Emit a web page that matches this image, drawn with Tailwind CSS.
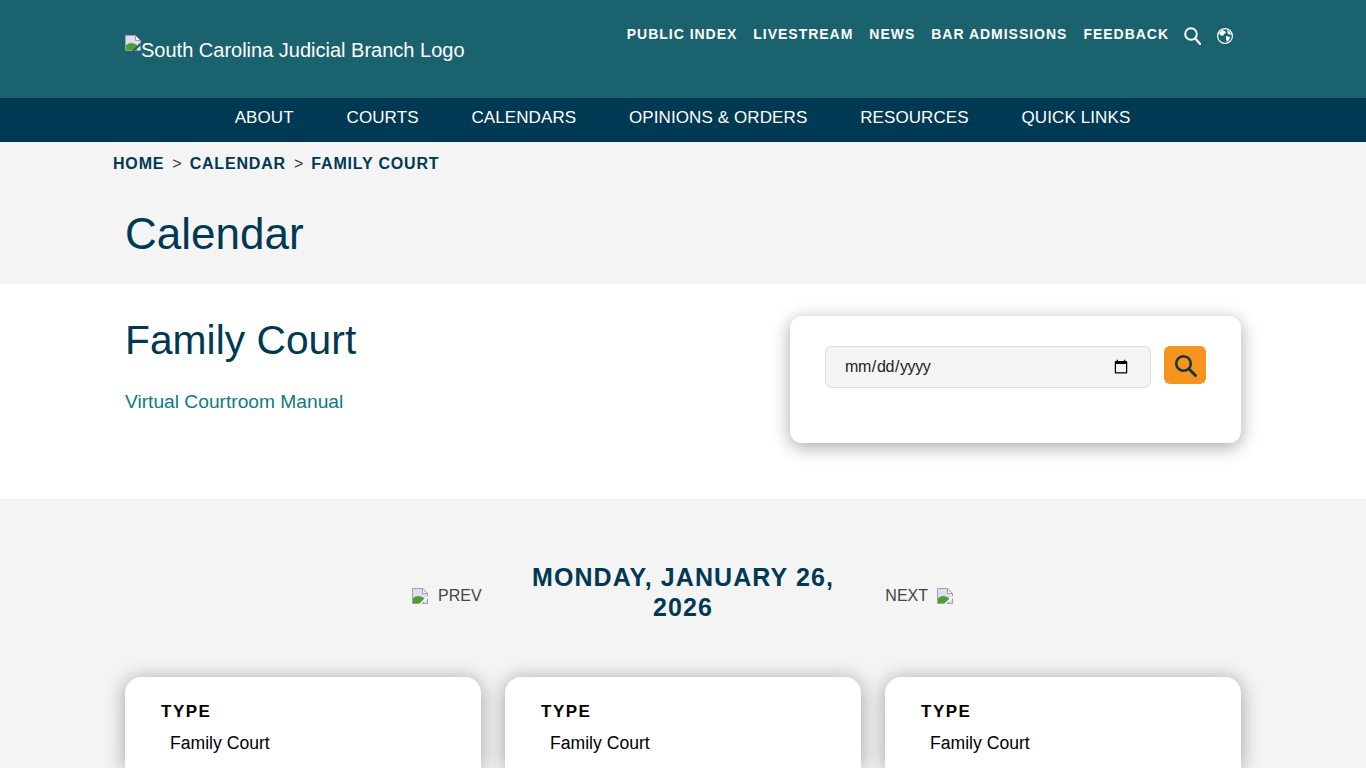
<!DOCTYPE html>
<html lang="en">
<head>
  <meta charset="UTF-8" />
  <title>Calendar - Family Court</title>
  <script src="https://cdn.jsdelivr.net/npm/@tailwindcss/browser@4"></script>
</head>
<body class="h-screen overflow-hidden bg-[#f4f4f4] font-['Liberation_Sans',Arial,sans-serif] text-black">
  <!-- top header -->
  <header class="h-[98px] bg-[#1b626f] text-white">
    <div class="w-[1140px] mx-auto px-3 flex justify-between">
      <a href="#" class="flex items-start pt-[35px] text-[20px] leading-[30px] text-white">
        <svg class="w-4 h-4 shrink-0" viewBox="0 0 16 16">
          <path d="M.5.5h10l5 5v10H.5z" fill="#dfdcf5" stroke="#a0a0a4"/>
          <path d="M10.5.5v5h5z" fill="#fff" stroke="#a0a0a4"/>
          <path d="M1 15v-5q4-3 8-1.500l3 1.500v5z" fill="#4f9e30"/>
          <path d="M7 16l8-8 1 .7v1.600L9.500 16z" fill="#1b626f"/>
        </svg>
        <span>South Carolina Judicial Branch Logo</span>
      </a>
      <nav class="flex items-start gap-4 pt-[25px] pr-[8px] text-[14px] leading-[18px] font-bold tracking-[0.98px]">
        <a href="#">PUBLIC INDEX</a>
        <a href="#">LIVESTREAM</a>
        <a href="#">NEWS</a>
        <a href="#">BAR ADMISSIONS</a>
        <a href="#">FEEDBACK</a>
        <svg class="w-[17px] h-[18px] mt-[2px] -ml-[1px]" viewBox="0 0 17 18" fill="none" stroke="#fff" stroke-width="2">
          <circle cx="7" cy="7" r="5.8"/>
          <path d="M11 11.3l5.2 5.7" stroke-linecap="round" stroke-width="2.2"/>
        </svg>
        <svg class="w-4 h-4 mt-[3px]" viewBox="0 0 16 16">
          <circle cx="8" cy="8" r="7.4" fill="none" stroke="#fff" stroke-width="1.2"/>
          <path d="M5 2l3 1 1 2-2 1-1 2-3-1-1-2zM9 8l4 1-1 3-2 2-1-3zM10 2l3 2 1 3-3-1z" fill="#fff"/>
        </svg>
      </nav>
    </div>
  </header>

  <!-- main nav -->
  <nav class="h-11 pb-1 pr-[1px] bg-[#003953] text-white flex justify-center items-center gap-[52.8px] text-[17px] tracking-[0.1px]">
    <a href="#">ABOUT</a>
    <a href="#">COURTS</a>
    <a href="#">CALENDARS</a>
    <a href="#">OPINIONS &amp; ORDERS</a>
    <a href="#">RESOURCES</a>
    <a href="#">QUICK LINKS</a>
  </nav>

  <!-- breadcrumb and title -->
  <div class="h-[142px] w-[1140px] mx-auto">
    <div class="flex items-center h-[43px] text-[16px] font-bold tracking-[0.82px] text-[#003953]">
      <a href="#">HOME</a>
      <span class="mx-2 font-normal tracking-normal text-[#333]">&gt;</span>
      <a href="#">CALENDAR</a>
      <span class="mx-2 font-normal tracking-normal text-[#333]">&gt;</span>
      <a href="#">FAMILY COURT</a>
    </div>
    <h1 class="px-3 pt-[23px] text-[44px] leading-[52px] text-[#003953]">Calendar</h1>
  </div>

  <!-- family court section -->
  <section class="h-[215px] bg-white">
    <div class="w-[1140px] mx-auto px-3 flex justify-between">
      <div class="pt-[30px]">
        <h2 class="text-[40.8px] leading-[52px] text-[#003953]">Family Court</h2>
        <a href="#" class="block mt-[24px] text-[19.2px] leading-[24px] text-[#0b7a85]">Virtual Courtroom Manual</a>
      </div>
      <div class="mt-8 w-[451px] h-[127px] bg-white rounded-xl shadow-[0_4px_18px_rgba(0,0,0,0.35)] pt-[30px] px-[35px] flex items-start gap-[13px]">
        <input type="date" class="w-[326px] h-[42px] pl-[18px] pr-[19px] bg-[#f4f4f4] border border-[#dedede] rounded-md text-[16px] tracking-[-0.4px] text-[#222]" />
        <button class="w-[42px] h-[38px] bg-[#f7941d] rounded-md flex items-center justify-center">
          <svg class="w-[23px] h-[23px]" viewBox="0 0 23 23" fill="none" stroke="#12393f" stroke-width="2.6">
            <circle cx="9.5" cy="9.5" r="7.3"/>
            <path d="M15 15l6.5 6.5" stroke-linecap="round" stroke-width="3"/>
          </svg>
        </button>
      </div>
    </div>
  </section>

  <!-- day selector -->
  <section class="pt-[63px] w-[1140px] mx-auto px-3">
    <div class="flex justify-center items-center pr-[1px]">
      <a href="#" class="flex items-center w-[110px] mt-2 text-[16px] text-[#444]">
        <svg class="w-4 h-4 shrink-0" viewBox="0 0 16 16">
          <path d="M.5.5h10l5 5v10H.5z" fill="#dfdcf5" stroke="#a0a0a4"/>
          <path d="M10.5.5v5h5z" fill="#fff" stroke="#a0a0a4"/>
          <path d="M1 15v-5q4-3 8-1.500l3 1.500v5z" fill="#4f9e30"/>
          <path d="M7 16l8-8 1 .7v1.600L9.500 16z" fill="#f4f4f4"/>
        </svg>
        <span class="ml-[10px]">PREV</span>
      </a>
      <h3 class="w-[322px] text-center text-[25px] leading-[30px] font-bold tracking-[1.1px] text-[#003953]">MONDAY, JANUARY 26, 2026</h3>
      <a href="#" class="flex items-center justify-end w-[109px] mt-2 text-[16px] text-[#444]">
        <span class="mr-[9px]">NEXT</span>
        <svg class="w-4 h-4 shrink-0" viewBox="0 0 16 16">
          <path d="M.5.5h10l5 5v10H.5z" fill="#dfdcf5" stroke="#a0a0a4"/>
          <path d="M10.5.5v5h5z" fill="#fff" stroke="#a0a0a4"/>
          <path d="M1 15v-5q4-3 8-1.500l3 1.500v5z" fill="#4f9e30"/>
          <path d="M7 16l8-8 1 .7v1.600L9.500 16z" fill="#f4f4f4"/>
        </svg>
      </a>
    </div>

    <!-- hearing cards -->
    <div class="grid grid-cols-3 gap-6 mt-[55px]">
      <div class="h-[91px] bg-white rounded-t-2xl shadow-[0_2px_20px_rgba(0,0,0,0.35)] pt-[25px] pl-9">
        <div class="text-[17px] leading-5 font-bold tracking-[1.5px]">TYPE</div>
        <div class="mt-[11px] ml-[9px] text-[17.6px] leading-5">Family Court</div>
      </div>
      <div class="h-[91px] bg-white rounded-t-2xl shadow-[0_2px_20px_rgba(0,0,0,0.35)] pt-[25px] pl-9">
        <div class="text-[17px] leading-5 font-bold tracking-[1.5px]">TYPE</div>
        <div class="mt-[11px] ml-[9px] text-[17.6px] leading-5">Family Court</div>
      </div>
      <div class="h-[91px] bg-white rounded-t-2xl shadow-[0_2px_20px_rgba(0,0,0,0.35)] pt-[25px] pl-9">
        <div class="text-[17px] leading-5 font-bold tracking-[1.5px]">TYPE</div>
        <div class="mt-[11px] ml-[9px] text-[17.6px] leading-5">Family Court</div>
      </div>
    </div>
  </section>
</body>
</html>
